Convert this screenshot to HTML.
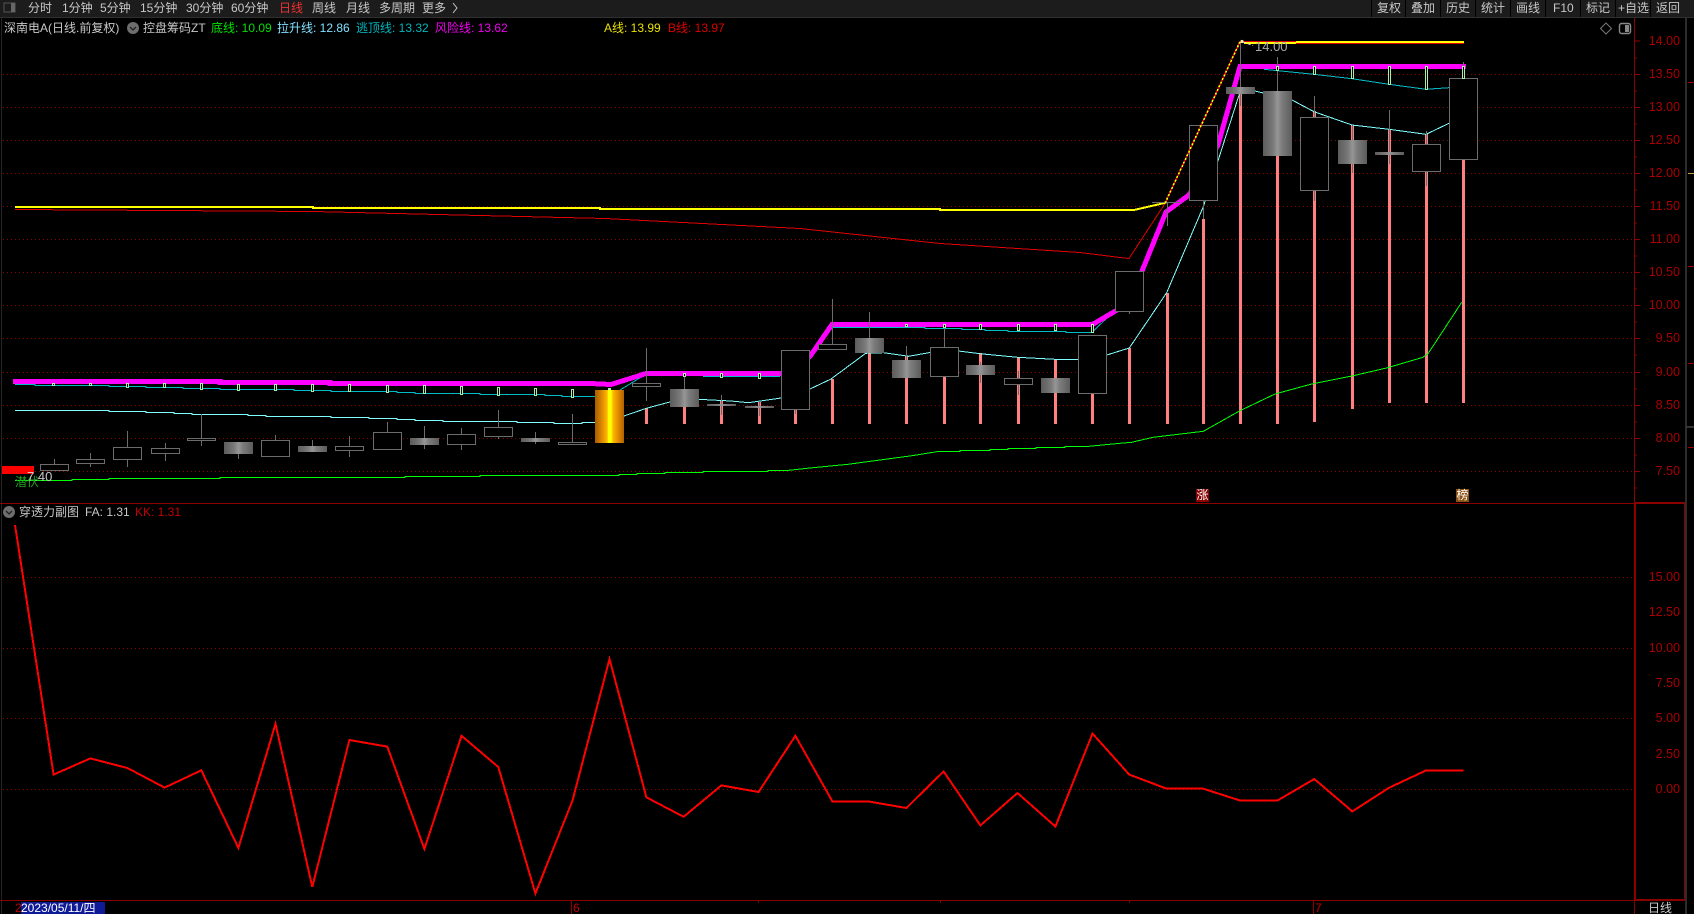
<!DOCTYPE html>
<html><head><meta charset="utf-8"><style>
html,body{margin:0;padding:0;background:#000;width:1694px;height:914px;overflow:hidden}
#r{position:relative;width:1694px;height:914px;background:#000;overflow:hidden;font:12px/14px "Liberation Sans","Noto Sans CJK SC",sans-serif;color:#c8c8c8}
#r span{position:absolute;white-space:nowrap}
svg{position:absolute;left:0;top:0}
.t span{top:1px}
.l span{top:21px}
.a span{right:14px;left:auto;color:#a80000;font-size:12.5px}
</style></head><body><div id="r">
<svg width="1694" height="914" viewBox="0 0 1694 914" shape-rendering="crispEdges">
<defs>
<linearGradient id="g"><stop offset="0" stop-color="#5c5c5c"/><stop offset=".2" stop-color="#6c6c6c"/><stop offset=".35" stop-color="#7a7a7a"/><stop offset=".5" stop-color="#969696"/><stop offset=".65" stop-color="#7c7c7c"/><stop offset=".85" stop-color="#6a6a6a"/><stop offset="1" stop-color="#5c5c5c"/></linearGradient>
<linearGradient id="o"><stop offset="0" stop-color="#a85a00"/><stop offset=".25" stop-color="#e08c00"/><stop offset=".42" stop-color="#ffb800"/><stop offset=".46" stop-color="#ffff00"/><stop offset=".56" stop-color="#ffff00"/><stop offset=".62" stop-color="#ffb800"/><stop offset=".8" stop-color="#e08c00"/><stop offset="1" stop-color="#b06000"/></linearGradient>
</defs>
<rect x="0" y="0" width="1694" height="17" fill="#1c1c1c"/>
<rect x="0" y="17" width="1694" height="1" fill="#303030"/>
<rect x="1" y="18" width="1" height="896" fill="#242424"/>
<path d="M1371.5 0V17M1405.5 0V17M1440.5 0V17M1475.5 0V17M1510.5 0V17M1545.5 0V17M1580.5 0V17M1615.5 0V17M1650.5 0V17" stroke="#000"/>
<rect x="1685" y="18" width="2" height="896" fill="#2c2c2c"/>
<rect x="1688" y="82" width="6" height="1" fill="#a00000"/><rect x="1688" y="173" width="6" height="1" fill="#c8a050"/><rect x="1688" y="266" width="6" height="1" fill="#a00000"/><rect x="1688" y="363" width="6" height="1" fill="#a00000"/><rect x="1685" y="426" width="9" height="2" fill="#333"/><rect x="1688" y="447" width="6" height="1" fill="#a00000"/>
<g stroke="#8c0000" stroke-dasharray="1 3" fill="none">
<path d="M3 74.5H1634M3 107.5H1634M3 140.5H1634M3 173.5H1634M3 206.5H1634M3 239.5H1634M3 272.5H1634M3 305.5H1634M3 338.5H1634M3 372.5H1634M3 405.5H1634M3 438.5H1634M3 471.5H1634M3 577.5H1634M3 648.5H1634M3 718.5H1634M3 789.5H1634"/>
</g>
<path d="M0 503.5H1634M0 900.5H1634M1634.5 18V914M1684.5 503V901" stroke="#8c0000" fill="none"/>
<rect x="1634" y="502" width="51" height="2" fill="#8c0000"/><rect x="1634" y="899" width="51" height="2" fill="#8c0000"/><rect x="1635" y="503" width="1" height="398" fill="#8c0000"/>
<path d="M1634 41H1640M1634 58H1637M1634 74.5H1640M1634 91H1637M1634 107.5H1640M1634 124H1637M1634 140.5H1640M1634 157H1637M1634 173.5H1640M1634 190H1637M1634 206.5H1640M1634 223H1637M1634 239.5H1640M1634 256H1637M1634 272.5H1640M1634 289H1637M1634 305.5H1640M1634 322H1637M1634 338.5H1640M1634 355H1637M1634 372.5H1640M1634 389H1637M1634 405.5H1640M1634 422H1637M1634 438.5H1640M1634 455H1637M1634 471.5H1640M1634 488H1637" stroke="#8c0000" fill="none"/>
<path d="M571.5 900V914M1313.5 900V914M1129.5 900V903M940.5 900V903M758.5 900V903" stroke="#8c0000"/>
<rect x="21" y="902" width="84" height="12" fill="#0f1a96"/>
<g fill="#ff8080">
<rect x="645" y="408" width="3" height="16"/><rect x="683" y="406" width="3" height="18"/><rect x="720" y="400" width="3" height="24"/><rect x="758" y="402" width="3" height="22"/><rect x="794" y="409" width="3" height="15"/><rect x="831" y="379" width="3" height="45"/><rect x="868" y="353" width="3" height="71"/><rect x="905" y="356" width="3" height="68"/><rect x="943" y="376" width="3" height="48"/><rect x="979" y="353" width="3" height="71"/><rect x="1017" y="357" width="3" height="67"/><rect x="1054" y="359" width="3" height="65"/><rect x="1091" y="393" width="3" height="31"/><rect x="1128" y="348" width="3" height="76"/><rect x="1166" y="293" width="3" height="131"/><rect x="1202" y="219" width="3" height="205"/><rect x="1239" y="94" width="3" height="330"/><rect x="1276" y="156" width="3" height="268"/><rect x="1313" y="111" width="3" height="311"/><rect x="1351" y="125" width="3" height="284"/><rect x="1388" y="129" width="3" height="274"/><rect x="1425" y="134" width="3" height="269"/><rect x="1462" y="159" width="3" height="244"/>
</g>
<g fill="none" stroke-linejoin="round">
<path stroke="#80ffff" d="M15 410.5H109V411.5H146V412.5H174V413.5H192V414.5H248V415.5H266V416.5H331V417.5H369V418.5H397V419.5H415V420.5H443V421.5H517V422.5H554V423.5H582V422.5H596M624 416L646.4 408.3L668.6 402.3L698 399.3L731 401L748.6 402.7L781 398L810 389L831 379L865.7 353.3L883.6 352.7L908.6 356.3L929 352.7L958.6 351L980 353.7L1017.5 357.3L1055 359.3L1078 359.3L1106.8 355L1129.3 348L1166.7 292.7L1203.3 206.7L1240 92L1255 91L1292 100L1314 111.7L1352 125L1389 129.3L1426 134.3L1449 123.3L1463 117"/>
<path stroke="#00bcc8" d="M15 384.5H35V385.5H109V386.5H146V387.5H183V388.5H220V389.5H294V390.5H331V391.5H397V392.5H415V393.5H480V394.5H545V395.5H562V396.5H596M620 390L638 379L646 375M703 376.5H780M810 355L832 327.5H925V328.5H962V329.5H985V330.5H1008V331.5H1066V332.5H1092L1112 313M1264 69.3L1314 74.3L1352 78.7L1389 84.3L1426 89.3L1463 86.7"/>
<path stroke="#00ff00" d="M15 480.5H72V479.5H109V478.5H220V477.5H405V476.5H480V475.5H619V474.5H637V473.5H665V472.5H703V471.5H768V470.5H787L810 468L848 464.3L880 460L912 455.7L938 451.5H960V450.5H990V449.5H1008V448.5H1036V447.5H1065V446.5H1087L1120 443.3L1131.7 442.3L1153 437.3L1203.3 431.3L1240 410.7L1275 394L1311.7 384L1352 376L1387.7 367.7L1423 357.3L1428.3 353.3L1461.7 302.3"/>
<path stroke="#e00000" d="M15 209.5L313 211.5L605 218.5L800 228.5L940 243.5L1080 252.5L1120 257.5L1129 258.5L1165 203.5"/>
<path stroke="#ffff00" stroke-width="2" d="M15 207H313V208H600V209H940V210H1134L1163 203.3L1167 202"/>
<path stroke="#ff00ff" stroke-width="5" stroke-linejoin="miter" d="M13 381.5H220V382.5H330V383.5H590L611 384.5L646 373.5H795L811 355L832 324.5H1092.5L1129 303L1166 212L1189 195L1218 145L1240 66.5H1466"/>
</g>
<g stroke="#6c6c6c" fill="none">
<path d="M54.5 459V464M90.5 453V467M127.5 431V467M165.5 443V461M201.5 414V446M238.5 442V459M275.5 435V456M312.5 440V452M349.5 436V457M387.5 422V449M424.5 426V449M461.5 428V450M498.5 410V439M535.5 432V444M572.5 414V444M646.5 348V401M684.5 375V407M721.5 395V415M759.5 402V416M795.5 350V414M832.5 299V349M869.5 312V353M906.5 346V378M944.5 325V376M980.5 362V383M1018.5 371V395M1055.5 378V393M1092.5 335V393M1129.5 271V314M1167.5 202V226M1152 202.5H1181M1203.5 200V219M1240.5 42V106M1277.5 57V156M1314.5 96V201M1352.5 125V173M1389.5 110V164M1426.5 131V186M1463.5 62V159"/>
<g fill="#000">
<rect x="40.5" y="464.5" width="28" height="6"/><rect x="76.5" y="459.5" width="28" height="4"/><rect x="113.5" y="447.5" width="28" height="12"/><rect x="151.5" y="448.5" width="28" height="5"/><rect x="187.5" y="438.5" width="28" height="2"/><rect x="261.5" y="440.5" width="28" height="16"/><rect x="335.5" y="446.5" width="28" height="4"/><rect x="373.5" y="432.5" width="28" height="17"/><rect x="447.5" y="434.5" width="28" height="10"/><rect x="484.5" y="427.5" width="28" height="9"/><rect x="558.5" y="442.5" width="28" height="2"/><rect x="632.5" y="383.5" width="28" height="3"/><rect x="781.5" y="350.5" width="28" height="59"/><rect x="818.5" y="344.5" width="28" height="5"/><rect x="930.5" y="347.5" width="28" height="29"/><rect x="1004.5" y="378.5" width="28" height="6"/><rect x="1078.5" y="335.5" width="28" height="58"/><rect x="1115.5" y="271.5" width="28" height="40"/><rect x="1189.5" y="125.5" width="28" height="75"/><rect x="1300.5" y="117.5" width="28" height="73"/><rect x="1412.5" y="144.5" width="28" height="27"/><rect x="1449.5" y="78.5" width="28" height="81"/>
</g>
</g>
<g fill="url(#g)">
<rect x="224" y="442" width="29" height="12"/><rect x="298" y="446" width="29" height="6"/><rect x="410" y="438" width="29" height="7"/><rect x="521" y="438" width="29" height="4"/><rect x="670" y="389" width="29" height="18"/><rect x="707" y="404" width="29" height="2"/><rect x="745" y="406" width="29" height="2"/><rect x="855" y="338" width="29" height="15"/><rect x="892" y="360" width="29" height="18"/><rect x="966" y="365" width="29" height="10"/><rect x="1041" y="378" width="29" height="15"/><rect x="1226" y="87" width="29" height="7"/><rect x="1263" y="91" width="29" height="65"/><rect x="1338" y="140" width="29" height="24"/><rect x="1375" y="152" width="29" height="3"/>
</g>
<rect x="595" y="390" width="29" height="53" fill="url(#o)"/>
<g stroke="#a8f0a8" fill="#000">
<rect x="52.5" y="383.5" width="2" height="2"/><rect x="89.5" y="383.5" width="2" height="2"/><rect x="126.5" y="383.5" width="2" height="4"/><rect x="163.5" y="383.5" width="2" height="4"/><rect x="200.5" y="383.5" width="2" height="6"/><rect x="237.5" y="384.5" width="2" height="6"/><rect x="274.5" y="384.5" width="2" height="6"/><rect x="311.5" y="384.5" width="2" height="7"/><rect x="348.5" y="384.5" width="2" height="7"/><rect x="386.5" y="385.5" width="2" height="7"/><rect x="423.5" y="385.5" width="2" height="8"/><rect x="460.5" y="386.5" width="2" height="8"/><rect x="497.5" y="387.5" width="2" height="8"/><rect x="534.5" y="388.5" width="2" height="7"/><rect x="571.5" y="389.5" width="2" height="8"/>
<rect x="683.5" y="373.5" width="2" height="3"/><rect x="720.5" y="373.5" width="2" height="4"/><rect x="758.5" y="373.5" width="2" height="5"/><rect x="905.5" y="324.5" width="2" height="2"/><rect x="943.5" y="324.5" width="2" height="3"/><rect x="979.5" y="324.5" width="2" height="5"/><rect x="1017.5" y="324.5" width="2" height="6"/><rect x="1054.5" y="324.5" width="2" height="6"/><rect x="1091.5" y="324.5" width="2" height="8"/>
<rect x="1276.5" y="66.5" width="2" height="4"/><rect x="1313.5" y="66.5" width="2" height="8"/><rect x="1351.5" y="66.5" width="2" height="12"/><rect x="1388.5" y="66.5" width="2" height="18"/><rect x="1425.5" y="66.5" width="2" height="23"/><rect x="1462.5" y="66.5" width="2" height="12"/>
</g>
<rect x="608" y="388" width="3" height="2" fill="#a8f0a8"/>
<rect x="1240" y="41" width="56" height="1" fill="#e00000"/><rect x="1244" y="42" width="52" height="2" fill="#ffff00"/>
<rect x="1296" y="41" width="168" height="2" fill="#ffff00"/><rect x="1296" y="43" width="168" height="1" fill="#e00000"/>
<g fill="none">
<path d="M1165 203.3L1240 41.7" stroke="#e00000" stroke-width="1.6"/>
<path d="M1165 203.3L1240 41.7" stroke="#ffff00" stroke-width="1.6" stroke-dasharray="2 2"/>
<path stroke="#ff0000" stroke-width="2" stroke-linejoin="miter" d="M15 525L53.6 774.6L90.3 758.4L127.4 768L164.6 787.6L201.3 770.3L238.4 848L275.5 723.9L312.3 887L349.4 740L387.3 746.6L424.4 849L461.5 735.8L498.3 767L535.4 893.5L572.5 800.6L609.5 659L646.4 797.3L683.6 816.8L721.4 785.4L758.6 792L795.4 735.8L832.5 801.6L869.3 801.6L906.4 808L943.6 771.4L980.4 825.4L1017.5 793L1055.4 826.5L1092.5 733.6L1129.3 774.6L1166.7 788.7L1203.3 788.7L1240.3 800.6L1277.3 800.6L1314.3 779L1352.3 811.4L1389.3 787.6L1426.3 770.3L1463.3 770.3"/>
</g>
<g shape-rendering="auto" fill="none">
<path d="M1243 42L1253 45.5" stroke="#e0e0e0" stroke-dasharray="3 2"/>
<circle cx="1242" cy="41.5" r="1.6" fill="#ffe8a0"/>
<path d="M1606 23L1611.5 28.5L1606 34L1600.5 28.5Z" stroke="#777"/>
<rect x="1619.5" y="23.5" width="11" height="10" rx="2" stroke="#888" stroke-width="1.4"/>
<rect x="1625" y="25" width="4" height="7" fill="#888"/>
<circle cx="133" cy="28" r="6" fill="#6e6e6e"/><path d="M130 27L133 30L136 27" stroke="#222" stroke-width="1.3"/>
<circle cx="9" cy="512" r="6" fill="#6e6e6e"/><path d="M6 511L9 514L12 511" stroke="#222" stroke-width="1.3"/>
<path d="M453 3L457 8L453 13" stroke="#c8c8c8"/>
<rect x="4" y="3" width="11" height="9" stroke="#555"/><rect x="11" y="3" width="4" height="9" fill="#666"/>
</g>
<rect x="2" y="466" width="32" height="8" fill="#ff0000"/>
<rect x="1196" y="489" width="13" height="13" fill="#880000"/>
<rect x="1456" y="489" width="13" height="13" fill="#8c5012"/>
</svg>
<div class="t">
<span style="left:28px">分时</span><span style="left:62px">1分钟</span><span style="left:100px">5分钟</span><span style="left:140px">15分钟</span><span style="left:186px">30分钟</span><span style="left:231px">60分钟</span><span style="left:279px;color:#f03030">日线</span><span style="left:312px">周线</span><span style="left:346px">月线</span><span style="left:379px">多周期</span><span style="left:422px">更多</span>
<span style="left:1377px">复权</span><span style="left:1411px">叠加</span><span style="left:1446px">历史</span><span style="left:1481px">统计</span><span style="left:1516px">画线</span><span style="left:1553px">F10</span><span style="left:1586px">标记</span><span style="left:1618px">+自选</span><span style="left:1656px">返回</span>
</div>
<div class="l">
<span style="left:4px">深南电A(日线.前复权)</span><span style="left:143px">控盘筹码ZT</span>
<span style="left:211px;color:#00e000">底线: 10.09</span>
<span style="left:277px;color:#80e0ff">拉升线: 12.86</span>
<span style="left:356px;color:#00b4bc">逃顶线: 13.32</span>
<span style="left:435px;color:#f000f0">风险线: 13.62</span>
<span style="left:604px;color:#e8e000">A线: 13.99</span>
<span style="left:668px;color:#e00000">B线: 13.97</span>
</div>
<div class="a">
<span style="top:34px">14.00</span><span style="top:67px">13.50</span><span style="top:100px">13.00</span><span style="top:133px">12.50</span><span style="top:166px">12.00</span><span style="top:199px">11.50</span><span style="top:232px">11.00</span><span style="top:265px">10.50</span><span style="top:298px">10.00</span><span style="top:331px">9.50</span><span style="top:365px">9.00</span><span style="top:398px">8.50</span><span style="top:431px">8.00</span><span style="top:464px">7.50</span>
<span style="top:570px">15.00</span><span style="top:605px">12.50</span><span style="top:641px">10.00</span><span style="top:676px">7.50</span><span style="top:711px">5.00</span><span style="top:747px">2.50</span><span style="top:782px">0.00</span>
</div>
<span style="left:19px;top:505px">穿透力副图</span><span style="left:85px;top:505px">FA: 1.31</span><span style="left:135px;top:505px;color:#c00000">KK: 1.31</span>
<span style="left:1255px;top:40px;color:#a8a8a8;font-size:13px">14.00</span>
<span style="left:15px;top:475px;color:#20a020">潜伏</span>
<span style="left:27px;top:470px;color:#c8c8c8;font-size:13px">7.40</span>
<span style="left:1196px;top:489px;width:13px;height:13px;line-height:13px;color:#fff;text-align:center">涨</span>
<span style="left:1456px;top:489px;width:13px;height:13px;line-height:13px;color:#fff;text-align:center">榜</span>
<span style="left:15px;top:901px;color:#c00000">2</span><span style="left:21px;top:901px;color:#fff">2023/05/11/四</span>
<span style="left:573px;top:901px;color:#c00000">6</span><span style="left:1315px;top:901px;color:#c00000">7</span>
<span style="left:1648px;top:901px;color:#ccc">日线</span>
</div></body></html>
